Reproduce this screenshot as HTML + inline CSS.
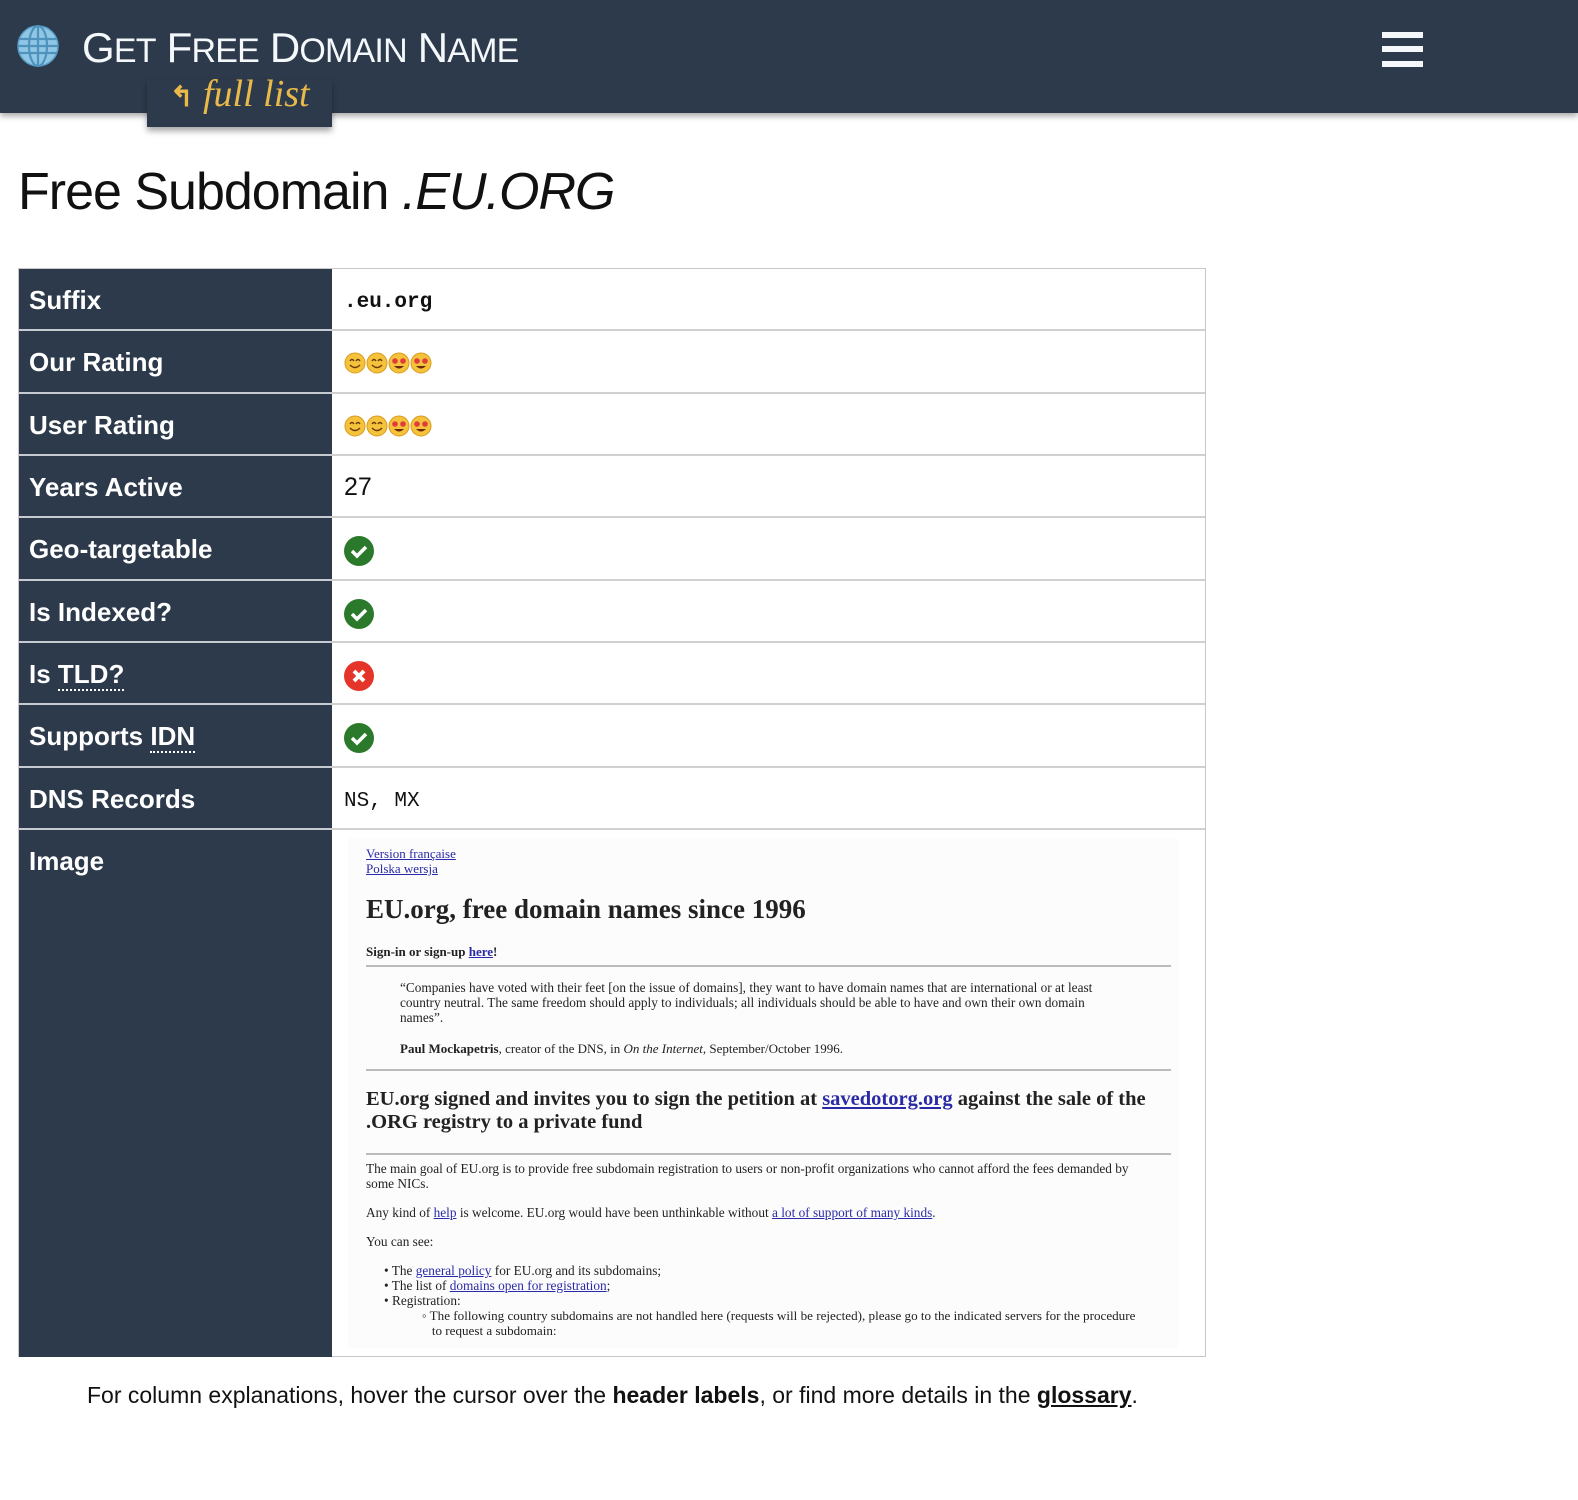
<!DOCTYPE html>
<html><head><meta charset="utf-8"><style>
*{margin:0;padding:0;box-sizing:border-box}
body{width:1578px;height:1500px;background:#fff;font-family:"Liberation Sans",sans-serif;position:relative;overflow:hidden;color:#111}
.hdr{position:absolute;left:0;top:0;width:1578px;height:113px;background:#2d3a4b;box-shadow:0 3px 6px rgba(0,0,0,.35)}
.tab{position:absolute;left:147px;top:80px;width:185px;height:47px;background:#2d3a4b;box-shadow:0 4px 6px rgba(0,0,0,.35)}
.title{position:absolute;left:82px;top:24px;color:#f4f8fb;font-size:42px;letter-spacing:-0.8px;white-space:nowrap}
.title small{font-size:34px}
.full{position:absolute;left:170px;top:72px;color:#e9b94a;font-family:"Liberation Serif",serif;font-style:italic;font-size:38px;white-space:nowrap}
.ham{position:absolute;left:1382px;width:41px;height:6px;background:#f4f8fb}
h1{position:absolute;left:18px;top:162px;font-weight:normal;font-size:52px;letter-spacing:-1px;white-space:nowrap}
.tbl{position:absolute;left:18px;top:268px;width:1188px;height:1089px;border:1px solid #c8c8c8;background:#fff}
.lab{position:absolute;left:0;width:313px;background:#2d3a4b;color:#fff;font-weight:bold;font-size:26px;padding-left:10px;border-bottom:2px solid #c6cbd1}
.val{position:absolute;left:313px;right:0;border-bottom:2px solid #d0d0d0;font-size:25px;padding-left:12px}
.mono{font-family:"Liberation Mono",monospace;font-size:21px}
.dot{border-bottom:2px dotted #fff}
.ss{position:absolute;left:348px;top:838px;width:830px;height:510px;background:#fcfcfc;font-family:"Liberation Serif",serif;color:#222;overflow:hidden}
.ss a{color:#2a2aa8;text-decoration:underline}
.ss p{position:absolute;left:18px;white-space:nowrap}
.ss hr{position:absolute;left:18px;width:805px;border:0;border-top:2px solid #bbb}
.foot{position:absolute;left:87px;top:1382px;font-size:23px;color:#111;white-space:nowrap}
</style></head><body>
<div class="hdr"></div>
<div class="tab"></div>
<svg style="position:absolute;left:17px;top:25px" width="42" height="42" viewBox="0 0 42 42">
<circle cx="21" cy="21" r="20" fill="#8fc6e6" stroke="#5aa0c8" stroke-width="1.5"/>
<g stroke="#4f93bd" stroke-width="2.2" fill="none">
<ellipse cx="21" cy="21" rx="9" ry="20"/><line x1="21" y1="1" x2="21" y2="41"/>
<line x1="2" y1="14" x2="40" y2="14"/><line x1="1" y1="21" x2="41" y2="21"/><line x1="2" y1="28" x2="40" y2="28"/></g>
</svg>
<div class="title">G<small>ET</small> F<small>REE</small> D<small>OMAIN</small> N<small>AME</small></div>
<div class="full"><span style="font-style:normal;font-family:'Liberation Sans';font-size:28px;font-weight:bold">↰</span> full list</div>
<div class="ham" style="top:32px"></div><div class="ham" style="top:46px"></div><div class="ham" style="top:61px"></div>
<h1>Free Subdomain <i>.EU.ORG</i></h1>
<div class="tbl">
<div class="lab" style="top:0;height:62px;line-height:62px">Suffix</div><div class="val mono" style="top:0;height:62px;line-height:68px;font-weight:bold">.eu.org</div>
<div class="lab" style="top:62px;height:63px;line-height:63px">Our Rating</div><div class="val" style="top:62px;height:63px"><svg style="margin-top:21px" width="90" height="22"><g id="s"><circle cx="11" cy="11" r="10" fill="#f5c33b" stroke="#d99a1e"/><path d="M6 9q2-3 4 0M12 9q2-3 4 0M6 13q5 5 10 0" stroke="#6b3b0c" stroke-width="1.4" fill="none"/></g><use href="#s" x="22"/><g id="h" transform="translate(44 0)"><circle cx="11" cy="11" r="10" fill="#f5c33b" stroke="#d99a1e"/><circle cx="7" cy="9" r="2.8" fill="#e23b3b"/><circle cx="15" cy="9" r="2.8" fill="#e23b3b"/><path d="M6 14q5 5 10 0z" fill="#6b2a0c"/></g><use href="#h" x="22"/></svg></div>
<div class="lab" style="top:125px;height:62px;line-height:62px">User Rating</div><div class="val" style="top:125px;height:62px"><svg style="margin-top:21px" width="90" height="22"><use href="#s"/><use href="#s" x="22"/><use href="#h"/><use href="#h" x="22"/></svg></div>
<div class="lab" style="top:187px;height:62px;line-height:62px">Years Active</div><div class="val" style="top:187px;height:62px;line-height:62px">27</div>
<div class="lab" style="top:249px;height:63px;line-height:63px">Geo-targetable</div><div class="val" style="top:249px;height:63px"><svg style="margin-top:18px" width="32" height="32"><g id="c"><circle cx="15" cy="15" r="15" fill="#2b7a2b"/><path d="M8 15l5 5 9-9" stroke="#fff" stroke-width="3.5" fill="none"/></g></svg></div>
<div class="lab" style="top:312px;height:62px;line-height:62px">Is Indexed?</div><div class="val" style="top:312px;height:62px"><svg style="margin-top:18px" width="32" height="32"><use href="#c"/></svg></div>
<div class="lab" style="top:374px;height:62px;line-height:62px">Is <span class="dot">TLD?</span></div><div class="val" style="top:374px;height:62px"><svg style="margin-top:18px" width="32" height="32"><circle cx="15" cy="15" r="15" fill="#e5352a"/><path d="M10 10l10 10M20 10l-10 10" stroke="#fff" stroke-width="4"/></svg></div>
<div class="lab" style="top:436px;height:63px;line-height:63px">Supports <span class="dot">IDN</span></div><div class="val" style="top:436px;height:63px"><svg style="margin-top:18px" width="32" height="32"><use href="#c"/></svg></div>
<div class="lab" style="top:499px;height:62px;line-height:62px">DNS Records</div><div class="val mono" style="top:499px;height:62px;line-height:68px">NS, MX</div>
<div class="lab" style="top:561px;height:527px;line-height:62px;border:0">Image</div>
</div>
<div class="ss">
<p style="top:8px;font-size:13px;line-height:15px"><a>Version française</a><br><a>Polska wersja</a></p>
<p style="top:56px;font-size:27px;font-weight:bold">EU.org, free domain names since 1996</p>
<p style="top:106px;font-size:13px;font-weight:bold">Sign-in or sign-up <a>here</a>!</p>
<hr style="top:127px">
<p style="top:142px;left:52px;font-size:13.3px;line-height:15px">“Companies have voted with their feet [on the issue of domains], they want to have domain names that are international or at least<br>country neutral. The same freedom should apply to individuals; all individuals should be able to have and own their own domain<br>names”.</p>
<p style="top:203px;left:52px;font-size:13px"><b>Paul Mockapetris</b>, creator of the DNS, in <i>On the Internet</i>, September/October 1996.</p>
<hr style="top:231px">
<p style="top:250px;font-size:20.5px;font-weight:bold;line-height:23px">EU.org signed and invites you to sign the petition at <a>savedotorg.org</a> against the sale of the<br>.ORG registry to a private fund</p>
<hr style="top:315px">
<p style="top:323px;font-size:13.3px;line-height:15px">The main goal of EU.org is to provide free subdomain registration to users or non-profit organizations who cannot afford the fees demanded by<br>some NICs.</p>
<p style="top:367px;font-size:13.3px">Any kind of <a>help</a> is welcome. EU.org would have been unthinkable without <a>a lot of support of many kinds</a>.</p>
<p style="top:396px;font-size:13.3px">You can see:</p>
<p style="top:425px;left:36px;font-size:13.3px;line-height:15px">• The <a>general policy</a> for EU.org and its subdomains;<br>• The list of <a>domains open for registration</a>;<br>• Registration:</p>
<p style="top:470px;left:74px;font-size:13.1px;line-height:15px">◦ The following country subdomains are not handled here (requests will be rejected), please go to the indicated servers for the procedure<br>&nbsp;&nbsp;&nbsp;to request a subdomain:</p>
</div>
<div class="foot">For column explanations, hover the cursor over the <b>header labels</b>, or find more details in the <b><u>glossary</u></b>.</div>
</body></html>
